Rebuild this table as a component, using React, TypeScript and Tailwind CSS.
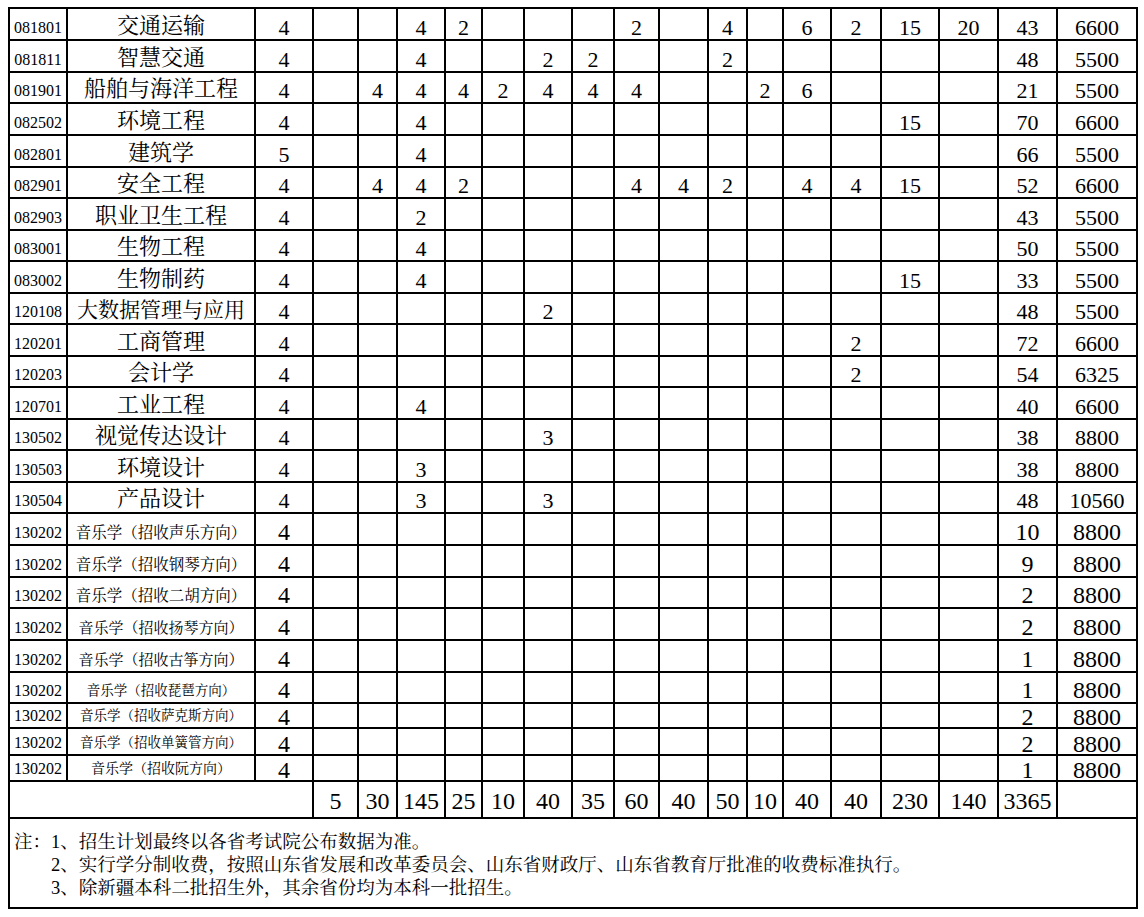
const colWidths = [
  'w-[58px]', 'w-[188px]', 'w-[58px]',
  'w-[45px]', 'w-[39px]', 'w-[48px]', 'w-[37px]', 'w-[42px]', 'w-[48px]', 'w-[42px]', 'w-[45px]',
  'w-[49px]', 'w-[39px]', 'w-[36px]', 'w-[48px]', 'w-[50px]', 'w-[58px]', 'w-[59px]',
  'w-[59px]', 'w-[80px]',
]

type Major = {
  id: string
  name: string
  years: string
  plan: Record<number, string>
  total: string
  fee: string
  h: string
  nameSize?: string
}

const majors: Major[] = [
  { id: '081801', name: '交通运输', years: '4', plan: { 3: '4', 4: '2', 8: '2', 10: '4', 12: '6', 13: '2', 14: '15', 15: '20' }, total: '43', fee: '6600', h: 'h-[32px]' },
  { id: '081811', name: '智慧交通', years: '4', plan: { 3: '4', 6: '2', 7: '2', 10: '2' }, total: '48', fee: '5500', h: 'h-[32px]' },
  { id: '081901', name: '船舶与海洋工程', years: '4', plan: { 2: '4', 3: '4', 4: '4', 5: '2', 6: '4', 7: '4', 8: '4', 11: '2', 12: '6' }, total: '21', fee: '5500', h: 'h-[31px]' },
  { id: '082502', name: '环境工程', years: '4', plan: { 3: '4', 14: '15' }, total: '70', fee: '6600', h: 'h-[32px]' },
  { id: '082801', name: '建筑学', years: '5', plan: { 3: '4' }, total: '66', fee: '5500', h: 'h-[32px]' },
  { id: '082901', name: '安全工程', years: '4', plan: { 2: '4', 3: '4', 4: '2', 8: '4', 9: '4', 10: '2', 12: '4', 13: '4', 14: '15' }, total: '52', fee: '6600', h: 'h-[31px]' },
  { id: '082903', name: '职业卫生工程', years: '4', plan: { 3: '2' }, total: '43', fee: '5500', h: 'h-[32px]' },
  { id: '083001', name: '生物工程', years: '4', plan: { 3: '4' }, total: '50', fee: '5500', h: 'h-[31px]' },
  { id: '083002', name: '生物制药', years: '4', plan: { 3: '4', 14: '15' }, total: '33', fee: '5500', h: 'h-[32px]' },
  { id: '120108', name: '大数据管理与应用', years: '4', plan: { 6: '2' }, total: '48', fee: '5500', h: 'h-[31px]', nameSize: 'text-[21px]' },
  { id: '120201', name: '工商管理', years: '4', plan: { 13: '2' }, total: '72', fee: '6600', h: 'h-[32px]' },
  { id: '120203', name: '会计学', years: '4', plan: { 13: '2' }, total: '54', fee: '6325', h: 'h-[31px]' },
  { id: '120701', name: '工业工程', years: '4', plan: { 3: '4' }, total: '40', fee: '6600', h: 'h-[32px]' },
  { id: '130502', name: '视觉传达设计', years: '4', plan: { 6: '3' }, total: '38', fee: '8800', h: 'h-[31px]' },
  { id: '130503', name: '环境设计', years: '4', plan: { 3: '3' }, total: '38', fee: '8800', h: 'h-[32px]' },
  { id: '130504', name: '产品设计', years: '4', plan: { 3: '3', 6: '3' }, total: '48', fee: '10560', h: 'h-[31px]' },
]

type Music = { name: string; total: string; h: string; size: string; pb: string }

const music: Music[] = [
  { name: '音乐学（招收声乐方向）', total: '10', h: 'h-[32px]', size: 'text-[15.5px]', pb: 'pb-[2px]' },
  { name: '音乐学（招收钢琴方向）', total: '9', h: 'h-[32px]', size: 'text-[15.5px]', pb: 'pb-[2px]' },
  { name: '音乐学（招收二胡方向）', total: '2', h: 'h-[31px]', size: 'text-[15.5px]', pb: 'pb-[2px]' },
  { name: '音乐学（招收扬琴方向）', total: '2', h: 'h-[32px]', size: 'text-[15px]', pb: 'pb-[2px]' },
  { name: '音乐学（招收古筝方向）', total: '1', h: 'h-[32px]', size: 'text-[15px]', pb: 'pb-[2px]' },
  { name: '音乐学（招收琵琶方向）', total: '1', h: 'h-[31px]', size: 'text-[13.5px]', pb: 'pb-[2px]' },
  { name: '音乐学（招收萨克斯方向）', total: '2', h: 'h-[25px]', size: 'text-[13.5px]', pb: 'pb-0' },
  { name: '音乐学（招收单簧管方向）', total: '2', h: 'h-[27px]', size: 'text-[13.5px]', pb: 'pb-0' },
  { name: '音乐学（招收阮方向）', total: '1', h: 'h-[26px]', size: 'text-[14px]', pb: 'pb-0' },
]

const sums = ['5', '30', '145', '25', '10', '40', '35', '60', '40', '50', '10', '40', '40', '230', '140']

const cell = 'border-2 border-black p-0 text-center align-bottom whitespace-nowrap'
const slots = Array.from({ length: 15 }, (_, i) => i + 1)

export default function App() {
  return (
    <div className="min-h-screen bg-white pl-[8px] pt-[7px] text-black font-['Liberation_Serif','Noto_Serif_CJK_SC','Noto_Sans_CJK_SC',serif]">
      <table className="table-fixed border-collapse w-[1130px]">
        <colgroup>
          {colWidths.map((w, i) => (
            <col key={i} className={w} />
          ))}
        </colgroup>
        <tbody>
          {majors.map((m) => (
            <tr key={m.id} className={m.h}>
              <td className={`${cell} text-[16px] leading-[20px] pb-[1px]`}>{m.id}</td>
              <td className={`${cell} ${m.nameSize ?? 'text-[22px]'} leading-[20px] pb-[3px]`}>{m.name}</td>
              <td className={`${cell} text-[22px] leading-[20px] pb-[1px]`}>{m.years}</td>
              {slots.map((s) => (
                <td key={s} className={`${cell} text-[22px] leading-[20px] pb-[1px]`}>
                  {m.plan[s] ?? ''}
                </td>
              ))}
              <td className={`${cell} text-[22px] leading-[20px] pb-[1px]`}>{m.total}</td>
              <td className={`${cell} text-[22px] leading-[20px] pb-[1px]`}>{m.fee}</td>
            </tr>
          ))}

          {music.map((r, i) => (
            <tr key={i} className={r.h}>
              <td className={`${cell} text-[16px] leading-[20px] pb-[1px]`}>130202</td>
              <td className={`${cell} ${r.size} leading-[20px] pb-[1px]`}>{r.name}</td>
              <td className={`${cell} text-[24px] leading-[20px] ${r.pb}`}>4</td>
              {slots.map((s) => (
                <td key={s} className={cell}></td>
              ))}
              <td className={`${cell} text-[24px] leading-[20px] ${r.pb}`}>{r.total}</td>
              <td className={`${cell} text-[24px] leading-[20px] ${r.pb}`}>8800</td>
            </tr>
          ))}

          {/* totals */}
          <tr className="h-[37px]">
            <td colSpan={3} className="border-2 border-black p-0"></td>
            {sums.map((v, i) => (
              <td key={i} className="border-2 border-black p-0 pt-[3px] text-center align-middle text-[24px] leading-[24px]">
                {v}
              </td>
            ))}
            <td className="border-2 border-black p-0 pt-[3px] text-center align-middle text-[24px] leading-[24px]">3365</td>
            <td className="border-2 border-black p-0"></td>
          </tr>

          {/* notes */}
          <tr className="h-[90px]">
            <td colSpan={20} className="border-2 border-black p-0 pl-[4px] pt-[5px] align-middle text-left text-[18.5px] leading-[23px]">
              <div>注：1、招生计划最终以各省考试院公布数据为准。</div>
              <div className="pl-[37px]">2、实行学分制收费，按照山东省发展和改革委员会、山东省财政厅、山东省教育厅批准的收费标准执行。</div>
              <div className="pl-[37px]">3、除新疆本科二批招生外，其余省份均为本科一批招生。</div>
            </td>
          </tr>
        </tbody>
      </table>
    </div>
  )
}
